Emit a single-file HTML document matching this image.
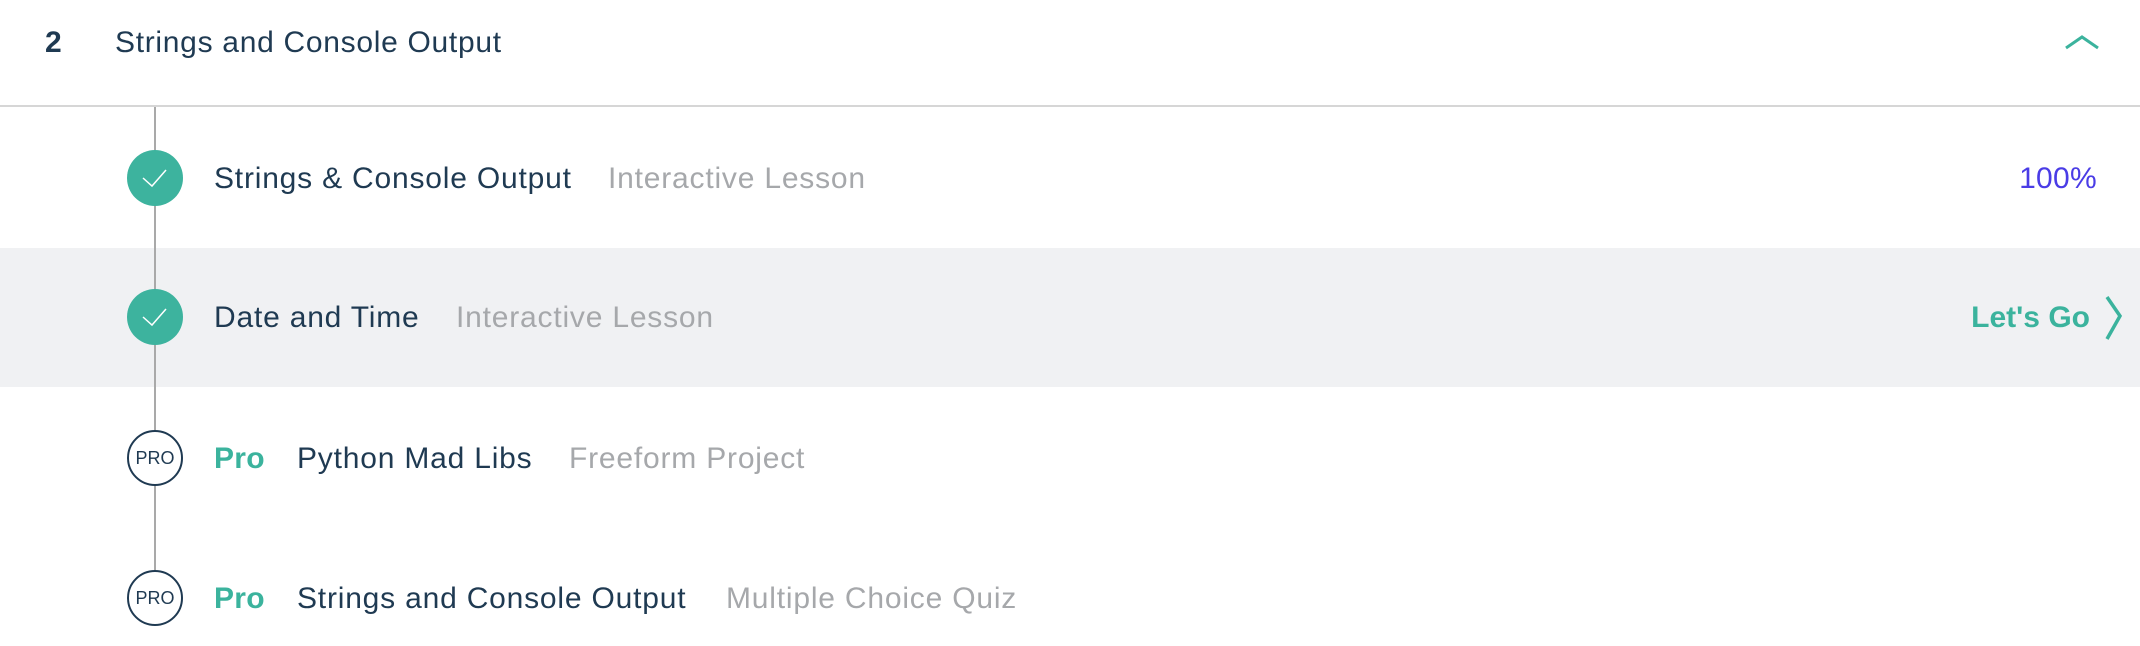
<!DOCTYPE html>
<html><head><meta charset="utf-8"><style>
*{margin:0;padding:0;box-sizing:border-box}
body{width:2140px;height:646px;background:#fff;position:relative;overflow:hidden;font-family:"Liberation Sans",sans-serif;color:#1f3a52}
.t{position:absolute;white-space:nowrap;font-size:30px;line-height:36px;letter-spacing:0.8px}
.g{color:#a6a8ab}
.teal{color:#3bb39d;font-weight:bold}
.circ{position:absolute;left:127px;width:56px;height:56px;border-radius:50%;background:#3db39e}
.pro{position:absolute;left:127px;width:56px;height:56px;border-radius:50%;background:#fff;border:2px solid #1f3a52;font-size:18px;text-align:center;line-height:52px;color:#1f3a52}
</style></head><body>
<div style="position:absolute;left:0;top:248px;width:2140px;height:139px;background:#f0f1f3"></div>
<div style="position:absolute;left:0;top:105px;width:2140px;height:2px;background:#d6d6d6"></div>
<div style="position:absolute;left:154px;top:107px;width:2px;height:491px;background:#a9a9a9"></div>

<div class="t" style="left:45px;top:25px;font-weight:bold">2</div>
<div class="t" style="left:115px;top:25px;letter-spacing:0.7px">Strings and Console Output</div>
<svg style="position:absolute;left:2064px;top:33px" width="36" height="18"><path d="M2 15 L18 4 L34 15" fill="none" stroke="#3bb39d" stroke-width="3"/></svg>

<div class="circ" style="top:150px"></div>
<svg style="position:absolute;left:127px;top:150px" width="56" height="56"><path d="M16 28 L25 36 L39 20" fill="none" stroke="#fff" stroke-width="1.5"/></svg>
<div class="t" style="left:214px;top:161px">Strings &amp; Console Output</div>
<div class="t g" style="left:608px;top:161px">Interactive Lesson</div>
<div class="t" style="right:43px;top:161px;color:#4a3ce6;letter-spacing:0.3px">100%</div>

<div class="circ" style="top:289px"></div>
<svg style="position:absolute;left:127px;top:289px" width="56" height="56"><path d="M16 28 L25 36 L39 20" fill="none" stroke="#fff" stroke-width="1.5"/></svg>
<div class="t" style="left:214px;top:300px">Date and Time</div>
<div class="t g" style="left:456px;top:300px">Interactive Lesson</div>
<div class="t teal" style="right:50px;top:300px;letter-spacing:0px">Let's Go</div>
<svg style="position:absolute;left:2103px;top:295px" width="22" height="46"><path d="M4 2 L17 21 L4 44" fill="none" stroke="#3bb39d" stroke-width="3.5"/></svg>

<div class="pro" style="top:430px">PRO</div>
<div class="t teal" style="left:214px;top:441px;letter-spacing:0.3px">Pro</div>
<div class="t" style="left:297px;top:441px">Python Mad Libs</div>
<div class="t g" style="left:569px;top:441px">Freeform Project</div>

<div class="pro" style="top:570px">PRO</div>
<div class="t teal" style="left:214px;top:581px;letter-spacing:0.3px">Pro</div>
<div class="t" style="left:297px;top:581px">Strings and Console Output</div>
<div class="t g" style="left:726px;top:581px">Multiple Choice Quiz</div>
</body></html>
